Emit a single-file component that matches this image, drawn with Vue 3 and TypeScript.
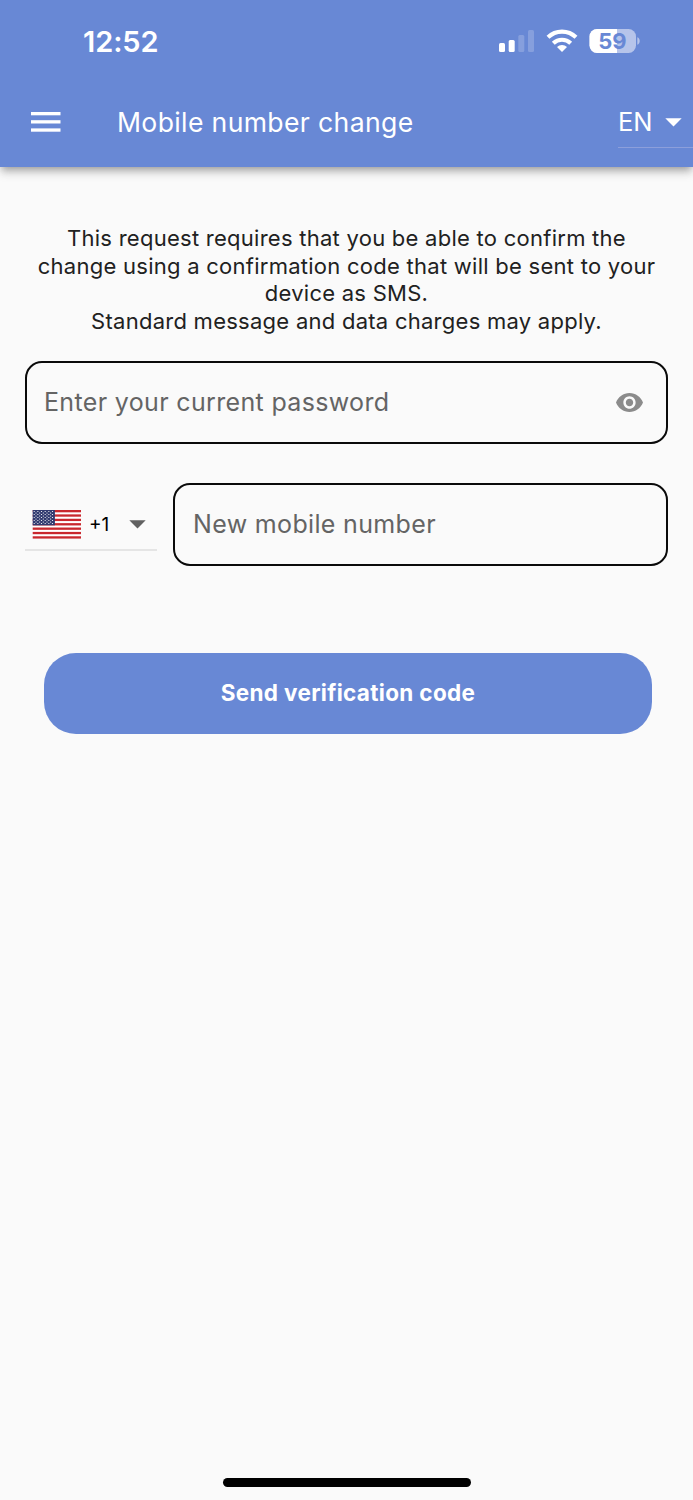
<script setup lang="ts">
import { ref } from 'vue'

const notice: string[] = [
  'This request requires that you be able to confirm the',
  'change using a confirmation code that will be sent to your',
  'device as SMS.',
  'Standard message and data charges may apply.',
]
const password = ref('')
const mobile = ref('')
const showPassword = ref(false)

interface Star { x: number; y: number }
const stars: Star[] = []
for (let row = 0; row < 9; row++) {
  const count = row % 2 ? 5 : 6
  for (let i = 0; i < count; i++) {
    stars.push({ x: (row % 2 ? 4.0 : 2.2) + i * 3.66, y: 1.5 + row * 1.5 })
  }
}
</script>

<template>
  <div class="screen">
    <header class="top">
      <div class="status">
        <span class="time">12:52</span>
        <svg class="status-icons" width="142" height="26" viewBox="0 0 142 26">
          <g fill="#fff">
            <rect x="1" y="15" width="6" height="9" rx="1.5" />
            <rect x="10.7" y="12" width="6" height="12" rx="1.5" />
            <rect x="20.3" y="7" width="6" height="17" rx="1.5" opacity=".2" />
            <rect x="30" y="2" width="6" height="22" rx="1.5" opacity=".2" />
          </g>
          <g fill="none" stroke="#fff" stroke-width="4.1">
            <path d="M50 9.300A20 20 0 0 1 78 9.300" />
            <path d="M55.3 15.2A12.6 12.6 0 0 1 72.7 15.2" />
          </g>
          <path d="M64 24l-5-5a7.1 7.1 0 0 1 10 0z" fill="#fff" />
          <clipPath id="cell"><rect x="91.5" y="1" width="46.5" height="24" rx="7.5" /></clipPath>
          <g clip-path="url(#cell)">
            <rect x="91" y="1" width="48" height="24" fill="#b6c4ea" />
            <rect x="91" y="1" width="28" height="24" fill="#fff" />
          </g>
          <path d="M139.3 9.2c3.2 1 3.2 6.600 0 7.600z" fill="#b6c4ea" />
          <text x="114.500" y="20.900" text-anchor="middle" class="charge">59</text>
        </svg>
      </div>
      <div class="bar">
        <svg class="menu" width="30" height="20" viewBox="0 0 30 20" fill="#fff">
          <rect y="0" width="29.500" height="3.300" />
          <rect y="8.200" width="29.500" height="3.300" />
          <rect y="16.400" width="29.500" height="3.300" />
        </svg>
        <h1>Mobile number change</h1>
        <div class="lang">
          <span>EN</span>
          <svg width="17" height="9" viewBox="0 0 17 9"><path d="M.3.300h16.400L8.500 8.500z" fill="#fff" /></svg>
        </div>
      </div>
    </header>

    <main>
      <p class="notice"><span v-for="line in notice" :key="line">{{ line }}</span></p>

      <label class="field password">
        <input v-model="password" :type="showPassword ? 'text' : 'password'" placeholder="Enter your current password" />
        <svg width="27" height="19" viewBox="1 4.500 22 15" preserveAspectRatio="none" fill="#8b8b8b" @click="showPassword = !showPassword">
          <path d="M12 4.500C7 4.500 2.730 7.610 1 12c1.730 4.390 6 7.500 11 7.500s9.270-3.110 11-7.500c-1.730-4.390-6-7.500-11-7.500zM12 17c-2.760 0-5-2.240-5-5s2.240-5 5-5 5 2.240 5 5-2.240 5-5 5zm0-8c-1.660 0-3 1.340-3 3s1.340 3 3 3 3-1.340 3-3-1.340-3-3-3z" />
        </svg>
      </label>

      <div class="phone">
        <div class="country">
          <svg width="49" height="29" viewBox="0 0 49 29">
            <rect x=".7" width="48.300" height="28.500" fill="#fff" />
            <rect v-for="n in 7" :key="n" x=".7" :y="(n - 1) * 4.38" width="48.300" height="2.300" fill="#c9282e" />
            <rect x=".7" y="0" width="22.200" height="15.300" fill="#323b70" />
            <circle v-for="(s, i) in stars" :key="i" :cx="s.x" :cy="s.y" r=".62" fill="#fff" />
          </svg>
          <span class="code">+1</span>
          <svg class="caret" width="17" height="9" viewBox="0 0 17 9"><path d="M.3.300h16.400L8.500 8.500z" fill="#616161" /></svg>
        </div>
        <label class="field mobile">
          <input v-model="mobile" type="tel" placeholder="New mobile number" />
        </label>
      </div>

      <button type="button">Send verification code</button>
    </main>
    <div class="home"></div>
  </div>
</template>

<style>
body { margin: 0; background: #fafafa; }
</style>

<style scoped>
.screen {
  box-sizing: border-box;
  width: 693px;
  height: 1500px;
  display: flex;
  flex-direction: column;
  overflow: hidden;
  background: #fafafa;
  color: #212121;
  font-family: Inter, "Liberation Sans", sans-serif;
}
.top {
  height: 167px;
  flex: none;
  background: #6888d5;
  color: #fff;
  box-shadow: 0 4px 8px -2px rgba(0, 0, 0, .34), 0 7px 9px rgba(0, 0, 0, .1);
}
.status {
  height: 84px;
  box-sizing: border-box;
  padding: 0 53px 2px 83px;
  display: flex;
  justify-content: space-between;
  align-items: center;
}
.time { font-size: 29px; font-weight: 600; line-height: 40px; letter-spacing: -.1px; padding-top: 2px; }
.status-icons { flex: none; }
.charge { font-size: 22px; font-weight: 700; fill: #6888d5; }
.bar { height: 76px; display: flex; align-items: center; padding-left: 31px; }
.menu { flex: none; }
h1 { margin: 0 0 0 56px; font-size: 26.600px; font-weight: 400; line-height: 36px; letter-spacing: .35px; white-space: nowrap; }
.lang {
  box-sizing: border-box;
  width: 75px;
  height: 52px;
  margin-left: auto;
  padding: 1px 11px 0 0;
  display: flex;
  align-items: center;
  justify-content: space-between;
  border-bottom: 1px solid #8c9fdb;
  font-size: 25.500px;
}
.lang span { padding-bottom: 2px; }
main { flex: 1; padding: 58px 25px 0; }
.notice {
  margin: 0;
  font-size: 22px;
  line-height: 27.500px;
  letter-spacing: .26px;
  text-align: center;
}
.notice span { display: block; white-space: nowrap; }
.field {
  box-sizing: border-box;
  height: 83px;
  display: flex;
  align-items: center;
  border: 2px solid #0a0a0a;
  border-radius: 17px;
  padding: 0 23px 0 17px;
}
.password { margin-top: 26px; }
input {
  flex: 1;
  min-width: 0;
  padding: 0 0 2px;
  border: 0;
  outline: 0;
  background: transparent;
  font: 400 25px/36px Inter, "Liberation Sans", sans-serif;
  letter-spacing: .34px;
  color: #212121;
}
input::placeholder { color: #646464; opacity: 1; }
.phone { margin-top: 39px; display: flex; gap: 16px; }
.country {
  box-sizing: border-box;
  width: 132px;
  height: 68px;
  padding: 17px 11px 0 7px;
  display: flex;
  align-items: center;
  border-bottom: 2px solid #e5e5e5;
}
.code { margin-left: 8px; font-size: 19px; color: #000; }
.caret { margin-left: auto; }
.mobile { flex: 1; padding-left: 18px; }
button {
  display: block;
  width: 608px;
  height: 81px;
  margin: 87px 0 0 19px;
  padding: 0 0 1px;
  border: 0;
  border-radius: 32px;
  background: #6888d5;
  color: #fff;
  font: 700 22.500px/30px Inter, "Liberation Sans", sans-serif;
  letter-spacing: .32px;
}
.home { flex: none; width: 248px; height: 9px; margin: 0 0 13px 223px; border-radius: 5px; background: #000; }
</style>
